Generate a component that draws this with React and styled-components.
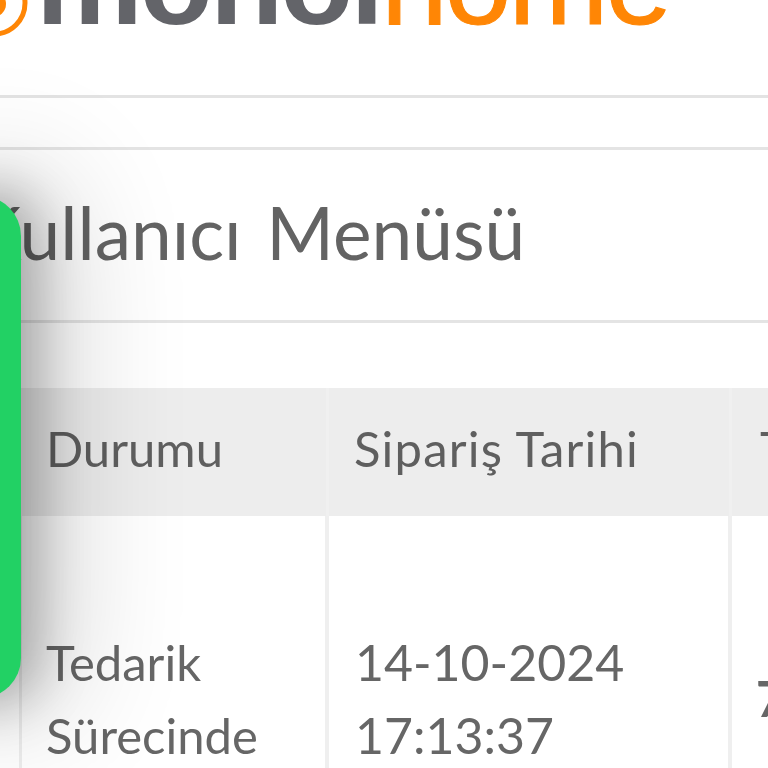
import React from "react";
import styled, { createGlobalStyle } from "styled-components";

const Global = createGlobalStyle`
  html, body { margin: 0; padding: 0; background: #fff; }
  #root { width: 768px; height: 768px; overflow: hidden; }
`;

const Page = styled.div`
  position: relative;
  width: 768px;
  height: 768px;
  overflow: hidden;
  background: #fff;
  font-family: Lato, "Noto Sans", sans-serif;
  color: #606060;
`;

const Header = styled.header`
  height: 95px;
  border-bottom: 3px solid #e3e3e3;
  overflow: hidden;
`;

const Logo = styled.div`
  display: flex;
  align-items: flex-start;
  height: 95px;
  overflow: hidden;
`;

const LogoMark = styled.svg`
  width: 30px;
  height: 40px;
  flex: none;
`;

const LogoWord = styled.div`
  font-family: "Liberation Sans", Arial, sans-serif;
  font-size: 120px;
  line-height: 118px;
  margin-top: -77px;
  margin-left: 6px;
  letter-spacing: -3px;
  white-space: nowrap;
`;

const LogoDark = styled.span`
  color: #636469;
  font-weight: 700;
`;

const LogoLight = styled.span`
  color: #ff8605;
  font-weight: 400;
  -webkit-text-stroke: 1px #ff8605;
`;

const Band = styled.div`
  height: 49px;
  border-bottom: 3px solid #e4e4e4;
`;

const Title = styled.h1`
  margin: 0;
  height: 173px;
  box-sizing: border-box;
  border-bottom: 3px solid #e4e4e4;
  padding: 42px 0 0 0;
  font-size: 73px;
  line-height: 80px;
  font-weight: 400;
  color: #636363;
  white-space: nowrap;
  text-indent: -27px;
  word-spacing: 6px;
`;

const Table = styled.div`
  margin: 65px 0 0 19px;
  display: grid;
  grid-template-columns: 310px 403px 200px;
  width: 913px;
`;

const HeadCell = styled.div`
  height: 128px;
  background: #ededed;
  box-sizing: border-box;
  border-right: 3px solid #f0f0f0;
  padding: 28px 0 0 ${(p) => p.$pad}px;
  font-size: 49px;
  line-height: 64px;
  letter-spacing: ${(p) => p.$track || 0}px;
  color: #5f5f5f;
  white-space: nowrap;
`;

const BodyCell = styled.div`
  height: 260px;
  box-sizing: border-box;
  border-right: 4px solid #efefef;
  border-left: ${(p) => (p.$first ? "3px solid #eeeeee" : "0")};
  padding: ${(p) => p.$top}px 0 0 ${(p) => p.$pad}px;
  font-size: ${(p) => p.$size || 49}px;
  line-height: 73px;
  color: #666666;
  white-space: nowrap;
`;

const Price = styled.span`
  font-weight: 700;
`;

const Sheet = styled.aside`
  position: absolute;
  left: -60px;
  top: 196px;
  width: 81px;
  height: 502px;
  background: #22d164;
  border-radius: 40px;
  box-shadow: 8px 0 50px 10px rgba(0, 0, 0, 0.26), 20px 0 120px 30px rgba(0, 0, 0, 0.16);
`;

export default function App() {
  return (
    <Page>
      <Global />
      <Header>
        <Logo>
          <LogoMark viewBox="0 0 30 40">
            <circle cx="-6" cy="3" r="31" fill="none" stroke="#ff8605" strokeWidth="5" />
            <circle cx="-7" cy="4" r="13" fill="#ff8605" />
          </LogoMark>
          <LogoWord>
            <LogoDark>monoi</LogoDark>
            <LogoLight>home</LogoLight>
          </LogoWord>
        </Logo>
      </Header>
      <Band />
      <Title>Kullanıcı Menüsü</Title>
      <Table>
        <HeadCell $pad={27}>Durumu</HeadCell>
        <HeadCell $pad={25} $track={1.2}>Sipariş Tarihi</HeadCell>
        <HeadCell $pad={28}>Toplam</HeadCell>
        <BodyCell $first $pad={24} $top={110}>Tedarik<br />Sürecinde</BodyCell>
        <BodyCell $pad={26} $size={50} $top={110}>14-10-2024<br />17:13:37</BodyCell>
        <BodyCell $pad={24} $top={146}><Price>7.499,00 TL</Price></BodyCell>
      </Table>
      <Sheet />
    </Page>
  );
}
